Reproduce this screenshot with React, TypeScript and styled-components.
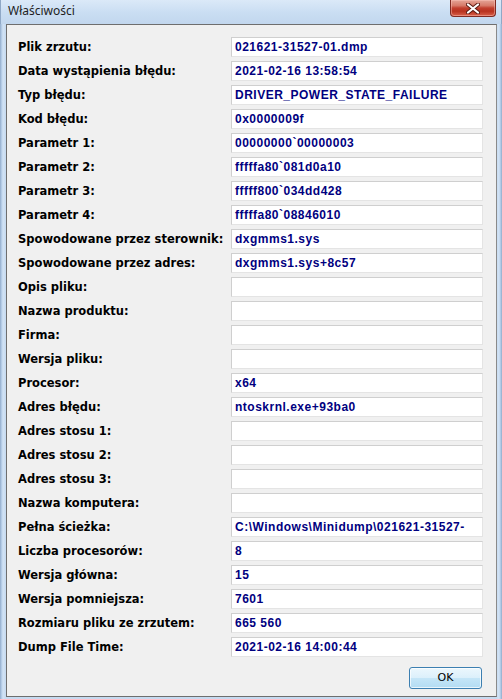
import React from "react";
import styled, { createGlobalStyle } from "styled-components";

const GlobalStyle = createGlobalStyle`
  html, body {
    margin: 0;
    padding: 0;
    background: #c4d9f0;
  }
  * { box-sizing: border-box; }
`;

const Window = styled.div`
  width: 502px;
  height: 699px;
  display: flex;
  flex-direction: column;
  background: linear-gradient(to right, #8fa8c6 0px, #a9c3e1 1px, #d2e3f5 3px, #c6daf0 6px, #c6daf0 496px, #d2e3f5 499px, #a9c3e1 501px, #8fa8c6 502px);
  overflow: hidden;
`;

const TitleBar = styled.div`
  height: 24px;
  flex: none;
  display: flex;
  align-items: flex-start;
  background: linear-gradient(180deg, #dbe9f8 0%, #c9ddf2 55%, #c2d7ee 100%);
  border-left: 1px solid #8fa8c6;
  border-right: 1px solid #8fa8c6;
`;

const Title = styled.div`
  padding: 3px 0 0 7px;
  font-family: "Noto Sans", "Open Sans", sans-serif;
  font-size: 12px;
  line-height: 16px;
  color: #1e1e1e;
`;

const CloseButton = styled.div`
  margin-left: auto;
  margin-right: 5px;
  width: 46px;
  height: 17px;
  display: flex;
  align-items: center;
  justify-content: center;
  border: 1px solid #7f2a22;
  border-top: none;
  border-radius: 0 0 4px 4px;
  background: linear-gradient(180deg, #e4a597 0%, #d77a69 35%, #c2402f 50%, #b8321f 70%, #d8604a 100%);
  box-shadow: inset 0 0 0 1px rgba(255, 200, 190, 0.45);
`;

const Client = styled.div`
  flex: 1;
  margin: 0 5px 2px 6px;
  border: 1px solid #6e6e6e;
  border-right-color: #8a8a8a;
  background: #f0f0f0;
  padding: 12px 13px 0 11px;
  display: flex;
  flex-direction: column;
`;

const Grid = styled.div`
  display: grid;
  grid-template-columns: 213px 1fr;
  grid-auto-rows: 20px;
  row-gap: 4px;
`;

const Label = styled.div`
  font-family: "DejaVu Sans", Verdana, sans-serif;
  font-weight: bold;
  font-size: 11.5px;
  line-height: 20px;
  color: #000;
  white-space: nowrap;
`;

const ValueBox = styled.div`
  height: 20px;
  background: #fff;
  border: 1px solid;
  border-color: #cfcfcf #e4e4e4 #e4e4e4 #cfcfcf;
  padding: 0 3px;
  font-family: "Liberation Sans", Arial, sans-serif;
  font-weight: bold;
  font-size: 12px;
  letter-spacing: 0.5px;
  line-height: 18px;
  color: #000080;
  white-space: nowrap;
  overflow: hidden;
`;

const Footer = styled.div`
  display: flex;
  justify-content: flex-end;
  margin-top: 10px;
  padding-right: 1px;
`;

const OkButton = styled.button`
  width: 73px;
  height: 22px;
  padding: 0;
  border: 1px solid #3c7fb1;
  border-radius: 3px;
  background: linear-gradient(180deg, #ecf7fd 0%, #dcf0fb 48%, #c4e5f7 52%, #b3dcf3 100%);
  box-shadow: inset 0 0 0 1px rgba(255, 255, 255, 0.7);
  font-family: "DejaVu Sans", sans-serif;
  font-size: 11px;
  color: #000;
  line-height: 20px;
`;

const rows: [string, string][] = [
  ["Plik zrzutu:", "021621-31527-01.dmp"],
  ["Data wystąpienia błędu:", "2021-02-16 13:58:54"],
  ["Typ błędu:", "DRIVER_POWER_STATE_FAILURE"],
  ["Kod błędu:", "0x0000009f"],
  ["Parametr 1:", "00000000`00000003"],
  ["Parametr 2:", "fffffa80`081d0a10"],
  ["Parametr 3:", "fffff800`034dd428"],
  ["Parametr 4:", "fffffa80`08846010"],
  ["Spowodowane przez sterownik:", "dxgmms1.sys"],
  ["Spowodowane przez adres:", "dxgmms1.sys+8c57"],
  ["Opis pliku:", ""],
  ["Nazwa produktu:", ""],
  ["Firma:", ""],
  ["Wersja pliku:", ""],
  ["Procesor:", "x64"],
  ["Adres błędu:", "ntoskrnl.exe+93ba0"],
  ["Adres stosu 1:", ""],
  ["Adres stosu 2:", ""],
  ["Adres stosu 3:", ""],
  ["Nazwa komputera:", ""],
  ["Pełna ścieżka:", "C:\\Windows\\Minidump\\021621-31527-"],
  ["Liczba procesorów:", "8"],
  ["Wersja główna:", "15"],
  ["Wersja pomniejsza:", "7601"],
  ["Rozmiaru pliku ze zrzutem:", "665 560"],
  ["Dump File Time:", "2021-02-16 14:00:44"],
];

const CloseIcon = () => (
  <svg width="14" height="11" viewBox="0 0 14 11">
    <path d="M2 1.5 L12 9.5 M12 1.5 L2 9.5" stroke="#5a1a12" strokeWidth="4" strokeLinecap="round" />
    <path d="M2 1.5 L12 9.5 M12 1.5 L2 9.5" stroke="#ffffff" strokeWidth="2.2" strokeLinecap="round" />
  </svg>
);

export default function App() {
  return (
    <>
      <GlobalStyle />
      <Window>
        <TitleBar>
          <Title>Właściwości</Title>
          <CloseButton>
            <CloseIcon />
          </CloseButton>
        </TitleBar>
        <Client>
          <Grid>
            {rows.map(([label, value]) => (
              <React.Fragment key={label}>
                <Label>{label}</Label>
                <ValueBox>{value}</ValueBox>
              </React.Fragment>
            ))}
          </Grid>
          <Footer>
            <OkButton>OK</OkButton>
          </Footer>
        </Client>
      </Window>
    </>
  );
}
